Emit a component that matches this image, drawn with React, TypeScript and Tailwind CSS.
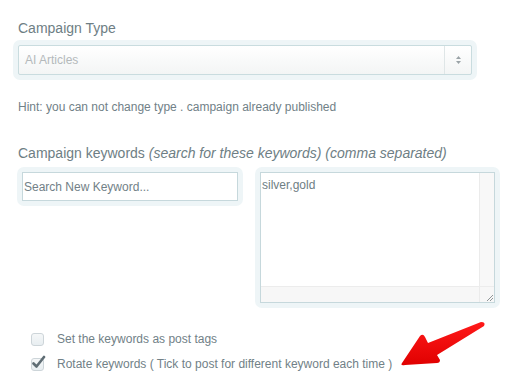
export default function App() {
  return (
    <div className="relative w-[517px] h-[388px] bg-white overflow-hidden font-['Liberation_Sans',Arial,sans-serif] text-[#6b7b82]">
      <div className="pt-[18px]">
        {/* campaign type */}
        <div className="ml-[18px] text-[14px] leading-[20px] text-[#6e7e84]">Campaign Type</div>
        <div className="mt-[2px] ml-[13px] w-[464px] p-[5px] rounded-[7px] bg-[#eef5f7]">
          <div className="flex h-[30px] border border-[#c9dcdf] rounded-[2px] bg-gradient-to-b from-white to-[#f3f5f5]">
            <div className="flex-1 flex items-center pl-[6px] text-[12px] text-[#b4b9bb]">AI Articles</div>
            <div className="w-[27px] border-l border-[#dfe6e7] flex flex-col items-center justify-center gap-[2px]">
              <svg width="5" height="3" viewBox="0 0 5 3">
                <path d="M2.5 0L5 3H0z" fill="#9aa3a7" />
              </svg>
              <svg width="5" height="3" viewBox="0 0 5 3">
                <path d="M0 0h5L2.5 3z" fill="#9aa3a7" />
              </svg>
            </div>
          </div>
        </div>

        <div className="mt-[19px] ml-[18px] text-[12px] leading-[16px] text-[#718187]">
          Hint: you can not change type . campaign already published
        </div>

        {/* keywords */}
        <div className="mt-[28px] ml-[18px] text-[14px] leading-[20px] text-[#6e7e84]">
          Campaign keywords <i>(search for these keywords) (comma separated)</i>
        </div>
        <div className="mt-[4px] flex items-start">
          <div className="ml-[17px] w-[226px] p-[5px] rounded-[7px] bg-[#eef5f7]">
            <div className="h-[29px] flex items-center pl-[1px] bg-white border border-[#c6d8dc] text-[12px] text-[#728187]">
              Search New Keyword...
            </div>
          </div>
          <div className="ml-[12px] w-[245px] h-[141px] p-[5px] rounded-[7px] bg-[#eef5f7]">
            <div className="h-full flex flex-col bg-white border border-[#c6d8dc]">
              <div className="flex-1 flex">
                <div className="flex-1 pt-[4px] pl-[1px] text-[12px] leading-[16px] text-[#6e7e84]">silver,gold</div>
                <div className="w-[15px] bg-[#f8f8f8] border-l border-[#ebebeb]" />
              </div>
              <div className="h-[16px] flex bg-[#f7f7f7] border-t border-[#ececec]">
                <div className="flex-1" />
                <div className="w-[15px] border-l border-[#ebebeb] flex items-end justify-end">
                  <svg width="8" height="8" viewBox="0 0 8 8">
                    <path d="M1 7L7 1M4 7L7 4" stroke="#8f9597" strokeWidth="1" />
                  </svg>
                </div>
              </div>
            </div>
          </div>
        </div>

        {/* checkboxes */}
        <div className="mt-[23px] ml-[31px] flex flex-col gap-[9px] text-[12px] leading-[16px] text-[#718187]">
          <div className="flex items-center gap-[13px] h-[16px]">
            <div className="w-[13px] h-[13px] rounded-[3px] border border-[#cdd5d9] bg-gradient-to-b from-[#f5f7f8] to-[#e8eef1]" />
            <span>Set the keywords as post tags</span>
          </div>
          <div className="flex items-center gap-[13px] h-[16px]">
            <div className="relative w-[13px] h-[13px] rounded-[3px] border border-[#cdd5d9] bg-gradient-to-b from-[#f5f7f8] to-[#e8eef1]">
              <svg className="absolute left-[0px] top-[-4px]" width="14" height="14" viewBox="0 0 14 14">
                <path d="M1.5 8.5L4.5 11.5L12 2" fill="none" stroke="#5f6d74" strokeWidth="2.6" strokeLinecap="round" strokeLinejoin="round" />
              </svg>
            </div>
            <span>Rotate keywords ( Tick to post for different keyword each time )</span>
          </div>
        </div>
      </div>

      {/* red annotation arrow */}
      <svg className="absolute left-0 top-0 pointer-events-none" width="517" height="388" viewBox="0 0 517 388">
        <defs>
          <linearGradient id="arrowFill" x1="0" y1="0" x2="0" y2="1">
            <stop offset="0" stopColor="#ff1a1a" />
            <stop offset="1" stopColor="#e00000" />
          </linearGradient>
        </defs>
        <path
          d="M402 363 L420 336 Q423 333 425 337 L428 343 L481 322 Q486 322 484 326 L437 355 L440 360 Q440 363 437 363 L405 365 Q400 366 402 363 Z"
          fill="url(#arrowFill)"
        />
      </svg>
    </div>
  );
}
